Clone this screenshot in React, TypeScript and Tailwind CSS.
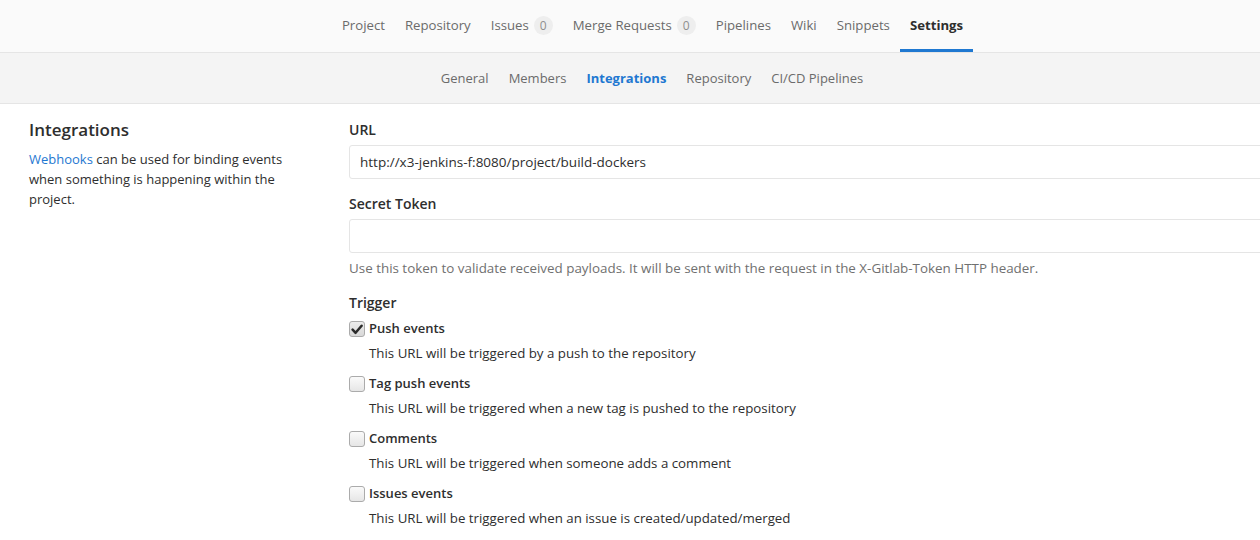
import React from "react";

const font = { fontFamily: '"Open Sans", "Noto Sans", sans-serif' };

function Badge({ n }: { n: string }) {
  return (
    <span className="ml-[5px] inline-flex h-[19px] min-w-[19px] items-center justify-center rounded-full bg-[#eeeeee] px-[5px] text-[12px] text-[#8f8f8f]">
      {n}
    </span>
  );
}

function TopNav() {
  const items: { label: string; badge?: string; active?: boolean }[] = [
    { label: "Project" },
    { label: "Repository" },
    { label: "Issues", badge: "0" },
    { label: "Merge Requests", badge: "0" },
    { label: "Pipelines" },
    { label: "Wiki" },
    { label: "Snippets" },
    { label: "Settings", active: true },
  ];
  return (
    <div className="flex h-[53px] justify-center border-b border-[#e5e5e5] bg-[#fafafa]">
      <div className="flex pl-[45px]">
        {items.map((it) => (
          <div
            key={it.label}
            className={
              "flex h-[52px] items-center border-b-[3px] px-[10px] pt-[2px] text-[13.2px] " +
              (it.active
                ? "border-[#1f78d1] font-bold text-[#2e2e2e]"
                : "border-transparent text-[#6b6b6b]")
            }
          >
            {it.label}
            {it.badge && <Badge n={it.badge} />}
          </div>
        ))}
      </div>
    </div>
  );
}

function SubNav() {
  const items = ["General", "Members", "Integrations", "Repository", "CI/CD Pipelines"];
  return (
    <div className="flex h-[51px] items-center justify-center border-b border-[#e5e5e5] bg-[#f4f4f4] pt-[2px]">
      <div className="flex gap-[20px] pl-[44px]">
        {items.map((it) => (
          <span
            key={it}
            className={
              "text-[13px] " +
              (it === "Integrations" ? "font-bold text-[#1f78d1]" : "text-[#6b6b6b]")
            }
          >
            {it}
          </span>
        ))}
      </div>
    </div>
  );
}

function Checkbox({ checked }: { checked?: boolean }) {
  return (
    <span
      className={
        "inline-flex h-[16px] w-[16px] shrink-0 items-center justify-center rounded-[3px] border border-[#ababab] " +
        (checked ? "bg-gradient-to-b from-[#ececec] to-[#d8d8d8]" : "bg-gradient-to-b from-[#fafafa] to-[#e6e6e6]")
      }
    >
      {checked && (
        <svg width="12" height="11" viewBox="0 0 12 11">
          <path d="M1.6 5.6 L4.6 8.8 L10.6 1.8" fill="none" stroke="#2b2b2b" strokeWidth="2.5" strokeLinecap="round" strokeLinejoin="round" />
        </svg>
      )}
    </span>
  );
}

function Trigger({ label, desc, checked }: { label: string; desc: string; checked?: boolean }) {
  return (
    <div className="pb-[10px] pt-[1px]">
      <div className="flex h-[20px] items-center gap-[4px]">
        <Checkbox checked={checked} />
        <span className="text-[13px] font-semibold text-[#2e2e2e]">{label}</span>
      </div>
      <div className="mt-[4px] pl-[20px] text-[13.3px] leading-[20px] text-[#2e2e2e]">{desc}</div>
    </div>
  );
}

export default function App() {
  return (
    <div className="h-[540px] w-[1260px] overflow-hidden bg-white" style={font}>
      <TopNav />
      <SubNav />
      <div className="flex pt-[16px]">
        <div className="w-[320px] shrink-0 pl-[29px] pr-[20px]">
          <h4 className="mb-[9px] text-[17px] font-semibold leading-[20px] text-[#2e2e2e]">Integrations</h4>
          <p className="text-[13px] leading-[20px] text-[#2e2e2e]">
            <span className="text-[#1f78d1]">Webhooks</span> can be used for binding events when something is happening within the project.
          </p>
        </div>
        <div className="shrink-0 pl-[29px]">
          <div className="text-[14px] font-semibold leading-[20px] text-[#2e2e2e]">URL</div>
          <div className="mt-[5px] flex h-[34px] w-[960px] items-center rounded-[3px] border border-[#e5e5e5] px-[10px] text-[13.5px] text-[#2e2e2e]">
            http://x3-jenkins-f:8080/project/build-dockers
          </div>
          <div className="mt-[15px] text-[14px] font-semibold leading-[20px] text-[#2e2e2e]">Secret Token</div>
          <div className="mt-[5px] h-[34px] w-[960px] rounded-[3px] border border-[#e5e5e5]" />
          <div className="mt-[5px] text-[13.4px] leading-[20px] text-[#707070]">
            Use this token to validate received payloads. It will be sent with the request in the X-Gitlab-Token HTTP header.
          </div>
          <div className="mt-[15px] text-[14px] font-semibold leading-[20px] text-[#2e2e2e]">Trigger</div>
          <div className="mt-[5px]">
            <Trigger checked label="Push events" desc="This URL will be triggered by a push to the repository" />
            <Trigger label="Tag push events" desc="This URL will be triggered when a new tag is pushed to the repository" />
            <Trigger label="Comments" desc="This URL will be triggered when someone adds a comment" />
            <Trigger label="Issues events" desc="This URL will be triggered when an issue is created/updated/merged" />
          </div>
        </div>
      </div>
    </div>
  );
}
